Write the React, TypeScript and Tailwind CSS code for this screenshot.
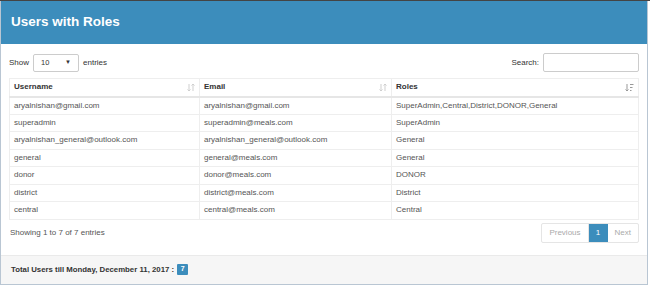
import React from 'react';

const users = [
  { username: 'aryalnishan@gmail.com', email: 'aryalnishan@gmail.com', roles: 'SuperAdmin,Central,District,DONOR,General' },
  { username: 'superadmin', email: 'superadmin@meals.com', roles: 'SuperAdmin' },
  { username: 'aryalnishan_general@outlook.com', email: 'aryalnishan_general@outlook.com', roles: 'General' },
  { username: 'general', email: 'general@meals.com', roles: 'General' },
  { username: 'donor', email: 'donor@meals.com', roles: 'DONOR' },
  { username: 'district', email: 'district@meals.com', roles: 'District' },
  { username: 'central', email: 'central@meals.com', roles: 'Central' },
];

const SortBoth = () => (
  <svg width="8" height="9" viewBox="0 0 8 9" className="text-[#cfcfcf]" fill="none" stroke="currentColor" strokeWidth="1">
    <path d="M2 1v7M0.5 6.5L2 8l1.5-1.5" />
    <path d="M6 8V1M4.5 2.5L6 1l1.5 1.5" />
  </svg>
);

const SortAsc = () => (
  <svg width="9" height="9" viewBox="0 0 9 9" className="text-[#999]" fill="none" stroke="currentColor" strokeWidth="1">
    <path d="M2 1v7M0.5 6.5L2 8l1.5-1.5" />
    <path d="M5 1.5h3.5M5 4.5h2.5M5 7.5h1.5" />
  </svg>
);

const App: React.FC = () => {
  return (
    <div className="w-[650px] h-[286px] bg-white border-t border-[#444] font-['Liberation_Sans',Arial,sans-serif] text-[#333]">
      <div className="mr-[2px] border-l border-r border-b border-[#b9c6d3] bg-white">
        {/* header */}
        <div className="h-[43px] bg-[#3c8dbc] flex items-center px-[10px]">
          <h3 className="text-[13.5px] font-bold text-white">Users with Roles</h3>
        </div>

        <div className="px-[8px] pt-[9px] pb-[12px]">
          {/* controls */}
          <div className="flex items-center justify-between h-[19px] text-[8px]">
            <div className="flex items-center gap-[4px]">
              <span>Show</span>
              <div className="w-[46px] h-[18px] border border-[#ccc] rounded-[2px] flex items-center justify-between px-[7px] text-[7.5px]">
                <span>10</span>
                <span className="text-[6px]">▼</span>
              </div>
              <span>entries</span>
            </div>
            <div className="flex items-center gap-[4px]">
              <span>Search:</span>
              <div className="w-[96px] h-[19px] border border-[#ccc] rounded-[2px]" />
            </div>
          </div>

          {/* table */}
          <table className="mt-[6px] w-full border-collapse border border-[#eee] text-[8px] table-fixed">
            <colgroup>
              <col className="w-[190px]" />
              <col className="w-[192px]" />
              <col />
            </colgroup>
            <thead>
              <tr className="h-[18px] border-b-2 border-[#e6e6e6]">
                <th className="border-r border-[#eee] text-left font-bold px-[4px]">
                  <div className="flex items-center justify-between">Username<SortBoth /></div>
                </th>
                <th className="border-r border-[#eee] text-left font-bold px-[4px]">
                  <div className="flex items-center justify-between">Email<SortBoth /></div>
                </th>
                <th className="text-left font-bold px-[4px]">
                  <div className="flex items-center justify-between">Roles<SortAsc /></div>
                </th>
              </tr>
            </thead>
            <tbody className="text-[#555]">
              {users.map((u) => (
                <tr key={u.username} className="h-[17.5px] border-b border-[#eee]">
                  <td className="border-r border-[#eee] px-[4px] whitespace-nowrap">{u.username}</td>
                  <td className="border-r border-[#eee] px-[4px] whitespace-nowrap">{u.email}</td>
                  <td className="px-[4px] whitespace-nowrap">{u.roles}</td>
                </tr>
              ))}
            </tbody>
          </table>

          {/* info + pagination */}
          <div className="mt-[3px] flex items-center justify-between text-[8px]">
            <span className="ml-[1px] text-[#555]">Showing 1 to 7 of 7 entries</span>
            <div className="flex h-[20px] border border-[#e5e5e5] rounded-[2px] text-[#aaa]">
              <span className="px-[7px] flex items-center border-r border-[#e5e5e5]">Previous</span>
              <span className="w-[19px] flex items-center justify-center bg-[#3c8dbc] text-white">1</span>
              <span className="px-[7px] flex items-center">Next</span>
            </div>
          </div>
        </div>

        {/* footer */}
        <div className="h-[29px] bg-[#f6f6f6] border-t border-[#eaeaea] flex items-center px-[10px] text-[7.8px] font-bold">
          <span>Total Users till Monday, December 11, 2017 :</span>
          <span className="ml-[3px] bg-[#3c8dbc] text-white text-[7px] w-[11px] h-[11px] flex items-center justify-center rounded-[1px]">7</span>
        </div>
      </div>
    </div>
  );
};

export default App;
